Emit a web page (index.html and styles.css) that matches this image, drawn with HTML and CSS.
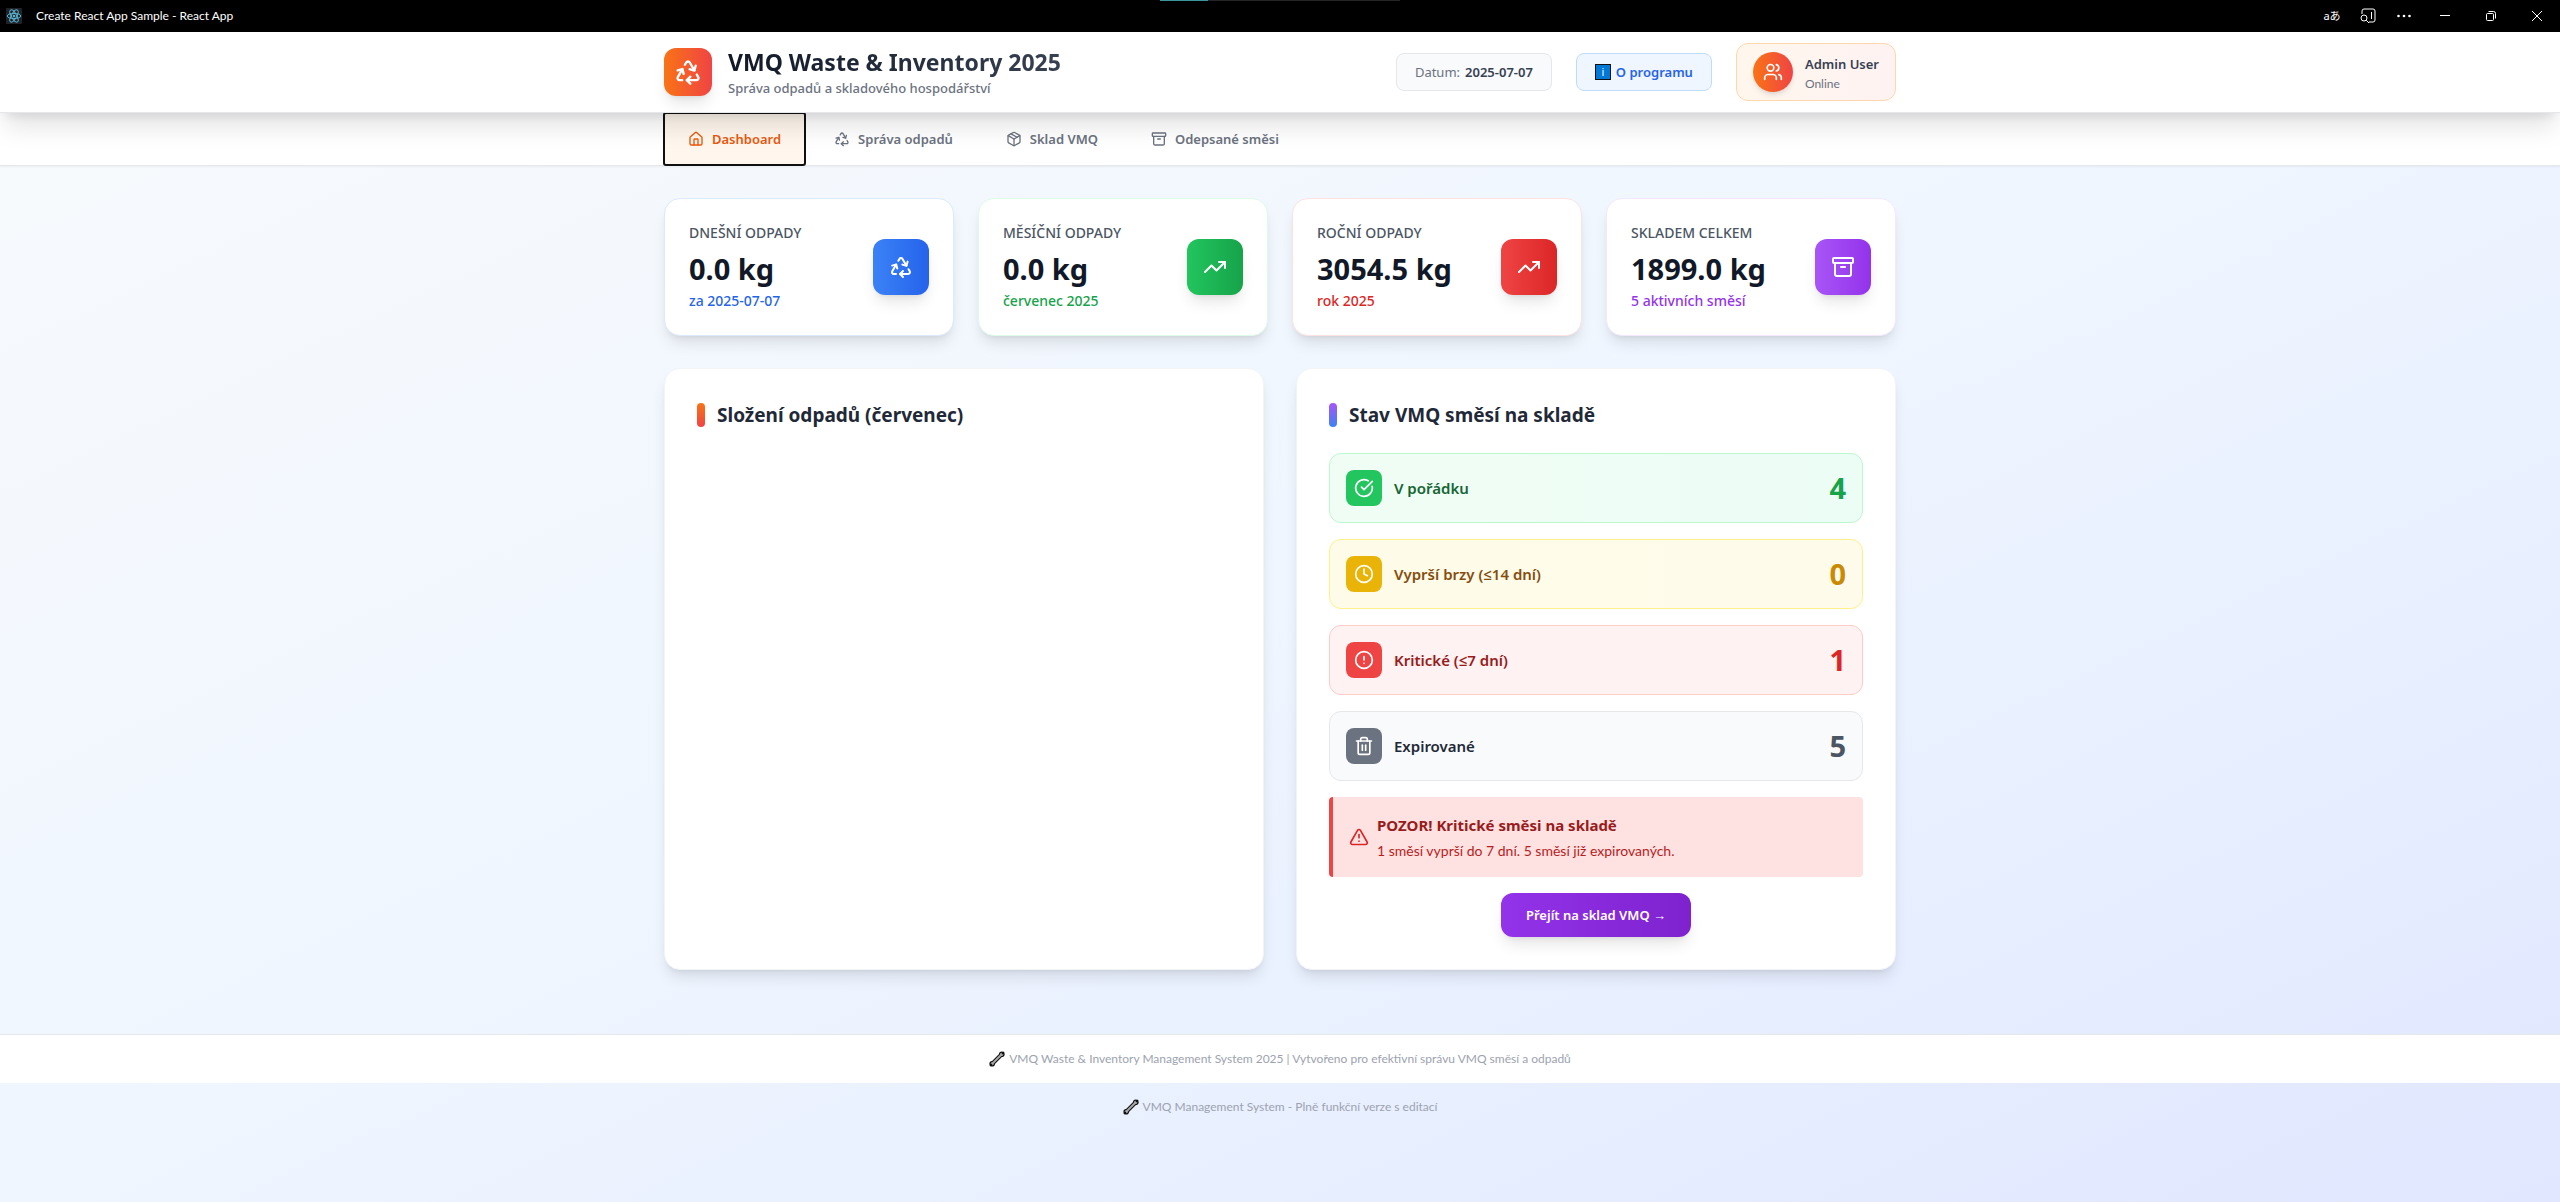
FILE: index.html
```html
<!DOCTYPE html>
<html lang="cs">
<head>
  <meta charset="utf-8">
  <meta name="viewport" content="width=device-width, initial-scale=1">
  <title>Create React App Sample - React App</title>
  <link rel="stylesheet" href="styles.css">
</head>
<body>
  <svg class="sprite" aria-hidden="true">
    <symbol id="i-recycle" viewBox="0 0 24 24"><path d="M7 19H4.815a1.83 1.83 0 0 1-1.57-.881 1.785 1.785 0 0 1-.004-1.784L7.196 9.5"/><path d="M11 19h8.203a1.83 1.83 0 0 0 1.556-.89 1.784 1.784 0 0 0 0-1.775l-1.226-2.12"/><path d="m14 16-3 3 3 3"/><path d="M8.293 13.596 7.196 9.5 3.1 10.598"/><path d="m9.344 5.811 1.093-1.892A1.83 1.83 0 0 1 11.985 3a1.784 1.784 0 0 1 1.546.888l3.943 6.843"/><path d="m13.378 9.633 4.096 1.098 1.097-4.096"/></symbol>
    <symbol id="i-home" viewBox="0 0 24 24"><path d="M15 21v-8a1 1 0 0 0-1-1h-4a1 1 0 0 0-1 1v8"/><path d="M3 10a2 2 0 0 1 .709-1.528l7-5.999a2 2 0 0 1 2.582 0l7 5.999A2 2 0 0 1 21 10v9a2 2 0 0 1-2 2H5a2 2 0 0 1-2-2z"/></symbol>
    <symbol id="i-package" viewBox="0 0 24 24"><path d="M11 21.73a2 2 0 0 0 2 0l7-4A2 2 0 0 0 21 16V8a2 2 0 0 0-1-1.73l-7-4a2 2 0 0 0-2 0l-7 4A2 2 0 0 0 3 8v8a2 2 0 0 0 1 1.73z"/><path d="M12 22V12"/><path d="m3.3 7 8.7 5 8.7-5"/><path d="m7.5 4.27 9 5.15"/></symbol>
    <symbol id="i-archive" viewBox="0 0 24 24"><rect width="20" height="5" x="2" y="3" rx="1"/><path d="M4 8v11a2 2 0 0 0 2 2h12a2 2 0 0 0 2-2V8"/><path d="M10 12h4"/></symbol>
    <symbol id="i-trend" viewBox="0 0 24 24"><path d="m22 7-8.5 8.5-5-5L2 17"/><path d="M16 7h6v6"/></symbol>
    <symbol id="i-users" viewBox="0 0 24 24"><path d="M16 21v-2a4 4 0 0 0-4-4H6a4 4 0 0 0-4 4v2"/><circle cx="9" cy="7" r="4"/><path d="M22 21v-2a4 4 0 0 0-3-3.87"/><path d="M16 3.13a4 4 0 0 1 0 7.75"/></symbol>
    <symbol id="i-check" viewBox="0 0 24 24"><path d="M21.801 10A10 10 0 1 1 17 3.335"/><path d="m9 11 3 3L22 4"/></symbol>
    <symbol id="i-clock" viewBox="0 0 24 24"><circle cx="12" cy="12" r="10"/><path d="M12 6v6l4 2"/></symbol>
    <symbol id="i-alert" viewBox="0 0 24 24"><circle cx="12" cy="12" r="10"/><path d="M12 8v4"/><path d="M12 16h.01"/></symbol>
    <symbol id="i-trash" viewBox="0 0 24 24"><path d="M3 6h18"/><path d="M19 6v14c0 1-1 2-2 2H7c-1 0-2-1-2-2V6"/><path d="M8 6V4c0-1 1-2 2-2h4c1 0 2 1 2 2v2"/><path d="M10 11v6"/><path d="M14 11v6"/></symbol>
    <symbol id="i-warning" viewBox="0 0 24 24"><path d="m21.73 18-8-14a2 2 0 0 0-3.48 0l-8 14A2 2 0 0 0 4 21h16a2 2 0 0 0 1.73-3"/><path d="M12 9v4"/><path d="M12 17h.01"/></symbol>
    <symbol id="i-wrench" viewBox="0 0 16 16"><path d="M3 13 13 3" stroke="#111" stroke-width="4" stroke-linecap="round"/><circle cx="3.2" cy="12.8" r="2.8" fill="#111" stroke="none"/><circle cx="12.8" cy="3.2" r="2.8" fill="#111" stroke="none"/><path d="M4 12 12 4" stroke="#a8a8a8" stroke-width="2"/><circle cx="3.4" cy="12.6" r="1.6" fill="#a8a8a8" stroke="none"/><circle cx="12.6" cy="3.4" r="1.6" fill="#a8a8a8" stroke="none"/><path d="M1 15l2-2M13 3l2-2" stroke="#111" stroke-width="1.4"/></symbol>
    <symbol id="i-react" viewBox="0 0 16 16"><rect width="16" height="16" rx="1" fill="#20232a" stroke="none"/><g fill="none" stroke="#5ab4cf" stroke-width="1"><ellipse cx="8" cy="8" rx="6.8" ry="2.6"/><ellipse cx="8" cy="8" rx="6.8" ry="2.6" transform="rotate(60 8 8)"/><ellipse cx="8" cy="8" rx="6.8" ry="2.6" transform="rotate(120 8 8)"/></g><circle cx="8" cy="8" r="1.3" fill="#5ab4cf" stroke="none"/></symbol>
  </svg>

  <div class="titlebar">
    <svg class="titlebar-icon"><use href="#i-react"/></svg>
    <span class="titlebar-name">Create React App Sample - React App</span>
    <div class="titlebar-tools">
      <button class="tool" type="button" aria-label="Přeložit"><span class="translate">aあ</span></button>
      <button class="tool" type="button" aria-label="Hledat na stránce"><svg width="16" height="16" viewBox="0 0 16 16"><path d="M2 6V3a2 2 0 0 1 2-2h9a2 2 0 0 1 2 2v9a2 2 0 0 1-2 2H9"/><path d="M11.5 4v7"/><circle cx="4" cy="10" r="3"/><path d="m6.2 12.2 2.8 2.8"/></svg></button>
      <button class="tool" type="button" aria-label="Další možnosti"><svg width="16" height="16" viewBox="0 0 16 16"><g fill="#fff" stroke="none"><circle cx="2.5" cy="8" r="1.3"/><circle cx="8" cy="8" r="1.3"/><circle cx="13.5" cy="8" r="1.3"/></g></svg></button>
      <button class="tool wide" type="button" aria-label="Minimalizovat"><svg width="10" height="10" viewBox="0 0 10 10"><path d="M0 4.5h10"/></svg></button>
      <button class="tool wide" type="button" aria-label="Obnovit"><svg width="10" height="10" viewBox="0 0 10 10"><rect x=".5" y="2.5" width="7" height="7" rx="1"/><path d="M2.5 .5h5a2 2 0 0 1 2 2v5"/></svg></button>
      <button class="tool wide" type="button" aria-label="Zavřít"><svg width="10" height="10" viewBox="0 0 10 10"><path d="m0 0 10 10M10 0 0 10"/></svg></button>
    </div>
  </div>

  <header class="header">
    <div class="container header-row">
      <div class="brand">
        <span class="logo"><svg class="icon icon-28"><use href="#i-recycle"/></svg></span>
        <div>
          <h1 class="brand-title">VMQ Waste &amp; Inventory 2025</h1>
          <p class="brand-sub">Správa odpadů a skladového hospodářství</p>
        </div>
      </div>
      <div class="header-side">
        <div class="date">Datum: <strong>2025-07-07</strong></div>
        <button class="about" type="button"><span class="info-mark" aria-hidden="true">i</span>O programu</button>
        <div class="user">
          <span class="avatar"><svg class="icon icon-20"><use href="#i-users"/></svg></span>
          <div>
            <p class="user-name">Admin User</p>
            <p class="user-state">Online</p>
          </div>
        </div>
      </div>
    </div>
  </header>

  <nav class="nav">
    <div class="container tabs">
      <button class="tab active" type="button"><svg class="icon icon-16"><use href="#i-home"/></svg>Dashboard</button>
      <button class="tab" type="button"><svg class="icon icon-16"><use href="#i-recycle"/></svg>Správa odpadů</button>
      <button class="tab" type="button"><svg class="icon icon-16"><use href="#i-package"/></svg>Sklad VMQ</button>
      <button class="tab" type="button"><svg class="icon icon-16"><use href="#i-archive"/></svg>Odepsané směsi</button>
    </div>
  </nav>

  <main class="container main">
    <section class="stats">
      <article class="stat blue">
        <div>
          <h2 class="stat-label">DNEŠNÍ ODPADY</h2>
          <p class="stat-value">0.0 kg</p>
          <p class="stat-note">za 2025-07-07</p>
        </div>
        <span class="stat-icon"><svg class="icon icon-24"><use href="#i-recycle"/></svg></span>
      </article>
      <article class="stat green">
        <div>
          <h2 class="stat-label">MĚSÍČNÍ ODPADY</h2>
          <p class="stat-value">0.0 kg</p>
          <p class="stat-note">červenec 2025</p>
        </div>
        <span class="stat-icon"><svg class="icon icon-24"><use href="#i-trend"/></svg></span>
      </article>
      <article class="stat red">
        <div>
          <h2 class="stat-label">ROČNÍ ODPADY</h2>
          <p class="stat-value">3054.5 kg</p>
          <p class="stat-note">rok 2025</p>
        </div>
        <span class="stat-icon"><svg class="icon icon-24"><use href="#i-trend"/></svg></span>
      </article>
      <article class="stat purple">
        <div>
          <h2 class="stat-label">SKLADEM CELKEM</h2>
          <p class="stat-value">1899.0 kg</p>
          <p class="stat-note">5 aktivních směsí</p>
        </div>
        <span class="stat-icon"><svg class="icon icon-24"><use href="#i-archive"/></svg></span>
      </article>
    </section>

    <div class="panels">
      <section class="panel">
        <h2 class="panel-title">Složení odpadů (červenec)</h2>
      </section>
      <section class="panel">
        <h2 class="panel-title cool">Stav VMQ směsí na skladě</h2>
        <ul class="states">
          <li class="state ok"><span class="state-icon"><svg class="icon icon-20"><use href="#i-check"/></svg></span><span class="state-name">V pořádku</span><span class="state-count">4</span></li>
          <li class="state soon"><span class="state-icon"><svg class="icon icon-20"><use href="#i-clock"/></svg></span><span class="state-name">Vyprší brzy (≤14 dní)</span><span class="state-count">0</span></li>
          <li class="state critical"><span class="state-icon"><svg class="icon icon-20"><use href="#i-alert"/></svg></span><span class="state-name">Kritické (≤7 dní)</span><span class="state-count">1</span></li>
          <li class="state expired"><span class="state-icon"><svg class="icon icon-20"><use href="#i-trash"/></svg></span><span class="state-name">Expirované</span><span class="state-count">5</span></li>
        </ul>
        <div class="alert">
          <svg class="icon icon-20"><use href="#i-warning"/></svg>
          <div>
            <p class="alert-title">POZOR! Kritické směsi na skladě</p>
            <p class="alert-text">1 směsí vyprší do 7 dní. 5 směsí již expirovaných.</p>
          </div>
        </div>
        <button class="cta" type="button">Přejít na sklad VMQ →</button>
      </section>
    </div>
  </main>

  <footer class="footer">
    <svg class="wrench"><use href="#i-wrench"/></svg>VMQ Waste &amp; Inventory Management System 2025 | Vytvořeno pro efektivní správu VMQ směsí a odpadů
  </footer>
  <p class="after-footer"><svg class="wrench"><use href="#i-wrench"/></svg>VMQ Management System - Plně funkční verze s editací</p>
</body>
</html>
```
FILE: styles.css
```css
*, *::before, *::after { box-sizing: border-box; }

:root {
  --ui: "Noto Sans", "Open Sans", sans-serif;
  --small: Lato, "Noto Sans", sans-serif;
  --shadow-lg: 0 10px 15px -3px rgba(0, 0, 0, .1), 0 4px 6px -4px rgba(0, 0, 0, .1);
  --shadow-xl: 0 20px 25px -5px rgba(0, 0, 0, .1), 0 8px 10px -6px rgba(0, 0, 0, .1);
}

body {
  margin: 0;
  min-height: 100vh;
  font: 14px/20px var(--ui);
  color: #111827;
  background: linear-gradient(to bottom right, #f8fafc, #eff6ff, #e0e7ff);
}

h1, h2, p, ul { margin: 0; padding: 0; }
ul { list-style: none; }
button { font: inherit; margin: 0; cursor: pointer; }

.sprite { position: absolute; width: 0; height: 0; }
.icon {
  display: block;
  flex: none;
  fill: none;
  stroke: currentColor;
  stroke-width: 2;
  stroke-linecap: round;
  stroke-linejoin: round;
}
.icon-16 { width: 16px; height: 16px; }
.icon-20 { width: 20px; height: 20px; }
.icon-24 { width: 24px; height: 24px; }
.icon-28 { width: 28px; height: 28px; }

.container { max-width: 1280px; margin: 0 auto; padding: 0 24px; }

/* window title bar */
.titlebar {
  display: flex;
  align-items: center;
  height: 32px;
  padding-left: 6px;
  color: #fff;
  background:
    linear-gradient(90deg, #3d959c 20%, #242424 20%) center top / 240px 1px no-repeat,
    #000;
}
.titlebar-icon { width: 16px; height: 16px; margin-right: 14px; }
.titlebar-name { font: 12px/16px var(--small); }
.titlebar-tools { display: flex; margin-left: auto; }
.tool {
  display: flex;
  align-items: center;
  justify-content: center;
  width: 36px;
  height: 32px;
  padding: 0;
  border: 0;
  color: #fff;
  background: none;
}
.tool.wide { width: 46px; }
.tool svg { fill: none; stroke: #fff; stroke-width: 1; }
.translate { font: 11px/16px "Noto Sans", "Noto Sans CJK JP", sans-serif; }

/* header */
.header {
  position: relative;
  z-index: 2;
  background: #fff;
  border-bottom: 1px solid #e5e7eb;
  box-shadow: var(--shadow-xl);
}
.header-row {
  display: flex;
  align-items: center;
  justify-content: space-between;
  min-height: 80px;
}
.brand { display: flex; align-items: center; gap: 16px; }
.logo {
  display: grid;
  place-items: center;
  width: 48px;
  height: 48px;
  border-radius: 12px;
  color: #fff;
  background: linear-gradient(90deg, #f97316, #ef4444);
  box-shadow: var(--shadow-lg);
}
.brand-title {
  width: max-content;
  font-size: 23px;
  font-weight: 700;
  line-height: 32px;
  color: transparent;
  background: linear-gradient(90deg, #111827, #374151);
  background-clip: text;
  -webkit-background-clip: text;
}
.brand-sub { font-size: 13px; font-weight: 500; line-height: 20px; color: #6b7280; }
.header-side { display: flex; align-items: center; gap: 24px; }
.date, .about {
  display: flex;
  align-items: center;
  gap: 5px;
  height: 38px;
  padding: 0 18px;
  border: 1px solid #e5e7eb;
  border-radius: 8px;
  font-size: 13px;
  color: #6b7280;
  background: #f9fafb;
}
.date strong { font-weight: 600; color: #374151; }
.about {
  font-weight: 600;
  color: #2563eb;
  background: #eff6ff;
  border-color: #bfdbfe;
}
.info-mark {
  display: grid;
  place-items: center;
  width: 16px;
  height: 16px;
  border: 1px solid #111;
  font-size: 11px;
  font-weight: 400;
  line-height: 14px;
  color: #fff;
  background: #0078d7;
}
.user {
  display: flex;
  align-items: center;
  gap: 12px;
  padding: 8px 16px;
  border: 1px solid #fed7aa;
  border-radius: 12px;
  background: linear-gradient(90deg, #fff7ed, #fef2f2);
}
.avatar {
  display: grid;
  place-items: center;
  width: 40px;
  height: 40px;
  border-radius: 50%;
  color: #fff;
  background: linear-gradient(90deg, #f97316, #ef4444);
  box-shadow: 0 4px 6px -1px rgba(0, 0, 0, .1), 0 2px 4px -2px rgba(0, 0, 0, .1);
}
.user-name { font-size: 13px; font-weight: 600; line-height: 24px; color: #374151; }
.user-state { font: 12px/16px var(--small); color: #6b7280; }

/* tabs */
.nav {
  background: #fff;
  border-bottom: 1px solid #e5e7eb;
  box-shadow: 0 1px 2px rgba(0, 0, 0, .05);
}
.tabs { display: flex; gap: 5px; }
.tab {
  display: flex;
  align-items: center;
  gap: 8px;
  height: 52px;
  padding: 0 24px;
  border: 0;
  font-size: 13px;
  font-weight: 600;
  color: #6b7280;
  background: none;
}
.tab.active {
  color: #ea580c;
  background: #fff7ed;
  outline: 2px solid #101010;
  outline-offset: -1px;
  border-radius: 2px;
}

/* statistics */
.main { padding-top: 32px; padding-bottom: 64px; }
.stats { display: grid; grid-template-columns: repeat(4, 1fr); gap: 24px; }
.stat {
  display: flex;
  align-items: center;
  justify-content: space-between;
  padding: 24px;
  border: 1px solid var(--edge);
  border-radius: 16px;
  background: #fff;
  box-shadow: var(--shadow-lg);
}
.stat-label { font-size: 14px; font-weight: 500; line-height: 20px; color: #4b5563; }
.stat-value { margin-top: 8px; font-size: 29px; font-weight: 700; line-height: 36px; }
.stat-note { margin-top: 4px; font-size: 14px; font-weight: 500; line-height: 20px; color: var(--to); }
.stat-icon {
  display: grid;
  place-items: center;
  width: 56px;
  height: 56px;
  border-radius: 12px;
  color: #fff;
  background: linear-gradient(90deg, var(--from), var(--to));
  box-shadow: var(--shadow-lg);
}
.blue { --edge: #dbeafe; --from: #3b82f6; --to: #2563eb; }
.green { --edge: #dcfce7; --from: #22c55e; --to: #16a34a; }
.red { --edge: #fee2e2; --from: #ef4444; --to: #dc2626; }
.purple { --edge: #f3e8ff; --from: #a855f7; --to: #9333ea; }

/* panels */
.panels { display: grid; grid-template-columns: 1fr 1fr; gap: 32px; margin-top: 32px; }
.panel {
  padding: 32px;
  border: 1px solid #f3f4f6;
  border-radius: 16px;
  background: #fff;
  box-shadow: var(--shadow-lg);
}
.panel-title {
  display: flex;
  gap: 12px;
  margin-bottom: 24px;
  font-size: 19px;
  font-weight: 700;
  line-height: 28px;
  color: #1f2937;
}
.panel-title::before {
  content: "";
  width: 8px;
  height: 24px;
  margin-top: 2px;
  border-radius: 4px;
  background: linear-gradient(#f97316, #ef4444);
}
.panel-title.cool::before { background: linear-gradient(#a855f7, #3b82f6); }

.states { display: grid; gap: 16px; }
.state {
  display: flex;
  align-items: center;
  gap: 12px;
  padding: 16px;
  border: 1px solid;
  border-radius: 12px;
}
.state-icon {
  display: grid;
  place-items: center;
  width: 36px;
  height: 36px;
  border-radius: 8px;
  color: #fff;
}
.state-name { font-size: 15px; font-weight: 600; line-height: 24px; }
.state-count { margin-left: auto; font-size: 29px; font-weight: 700; line-height: 36px; }

.ok { border-color: #bbf7d0; background: linear-gradient(90deg, #f0fdf4, #ecfdf5); color: #166534; }
.ok .state-icon { background: #22c55e; }
.ok .state-count { color: #16a34a; }
.soon { border-color: #fef08a; background: linear-gradient(90deg, #fefce8, #fffbeb); color: #854d0e; }
.soon .state-icon { background: #eab308; }
.soon .state-count { color: #ca8a04; }
.critical { border-color: #fecaca; background: #fef2f2; color: #991b1b; }
.critical .state-icon { background: #ef4444; }
.critical .state-count { color: #dc2626; }
.expired { border-color: #e5e7eb; background: #f9fafb; color: #1f2937; }
.expired .state-icon { background: #6b7280; }
.expired .state-count { color: #4b5563; }

.alert {
  display: flex;
  align-items: center;
  gap: 8px;
  margin-top: 16px;
  padding: 16px;
  border-left: 4px solid #ef4444;
  border-radius: 4px;
  color: #dc2626;
  background: #fee2e2;
}
.alert-title { font-size: 15px; font-weight: 700; line-height: 24px; color: #991b1b; }
.alert-text { margin-top: 4px; font: 14px/20px var(--small); color: #b91c1c; }

.cta {
  display: block;
  margin: 16px auto 0;
  padding: 12px 25px;
  border: 0;
  border-radius: 12px;
  font-size: 13px;
  font-weight: 600;
  line-height: 20px;
  color: #fff;
  background: linear-gradient(90deg, #9333ea, #7e22ce);
  box-shadow: var(--shadow-lg);
}

/* footer */
.footer, .after-footer {
  display: flex;
  align-items: center;
  justify-content: center;
  gap: 4px;
  padding: 16px;
  font: 12px/16px var(--small);
  color: #9ca3af;
}
.footer { border-top: 1px solid #e5e7eb; background: #fff; }
.wrench { width: 16px; height: 16px; fill: none; }
```
